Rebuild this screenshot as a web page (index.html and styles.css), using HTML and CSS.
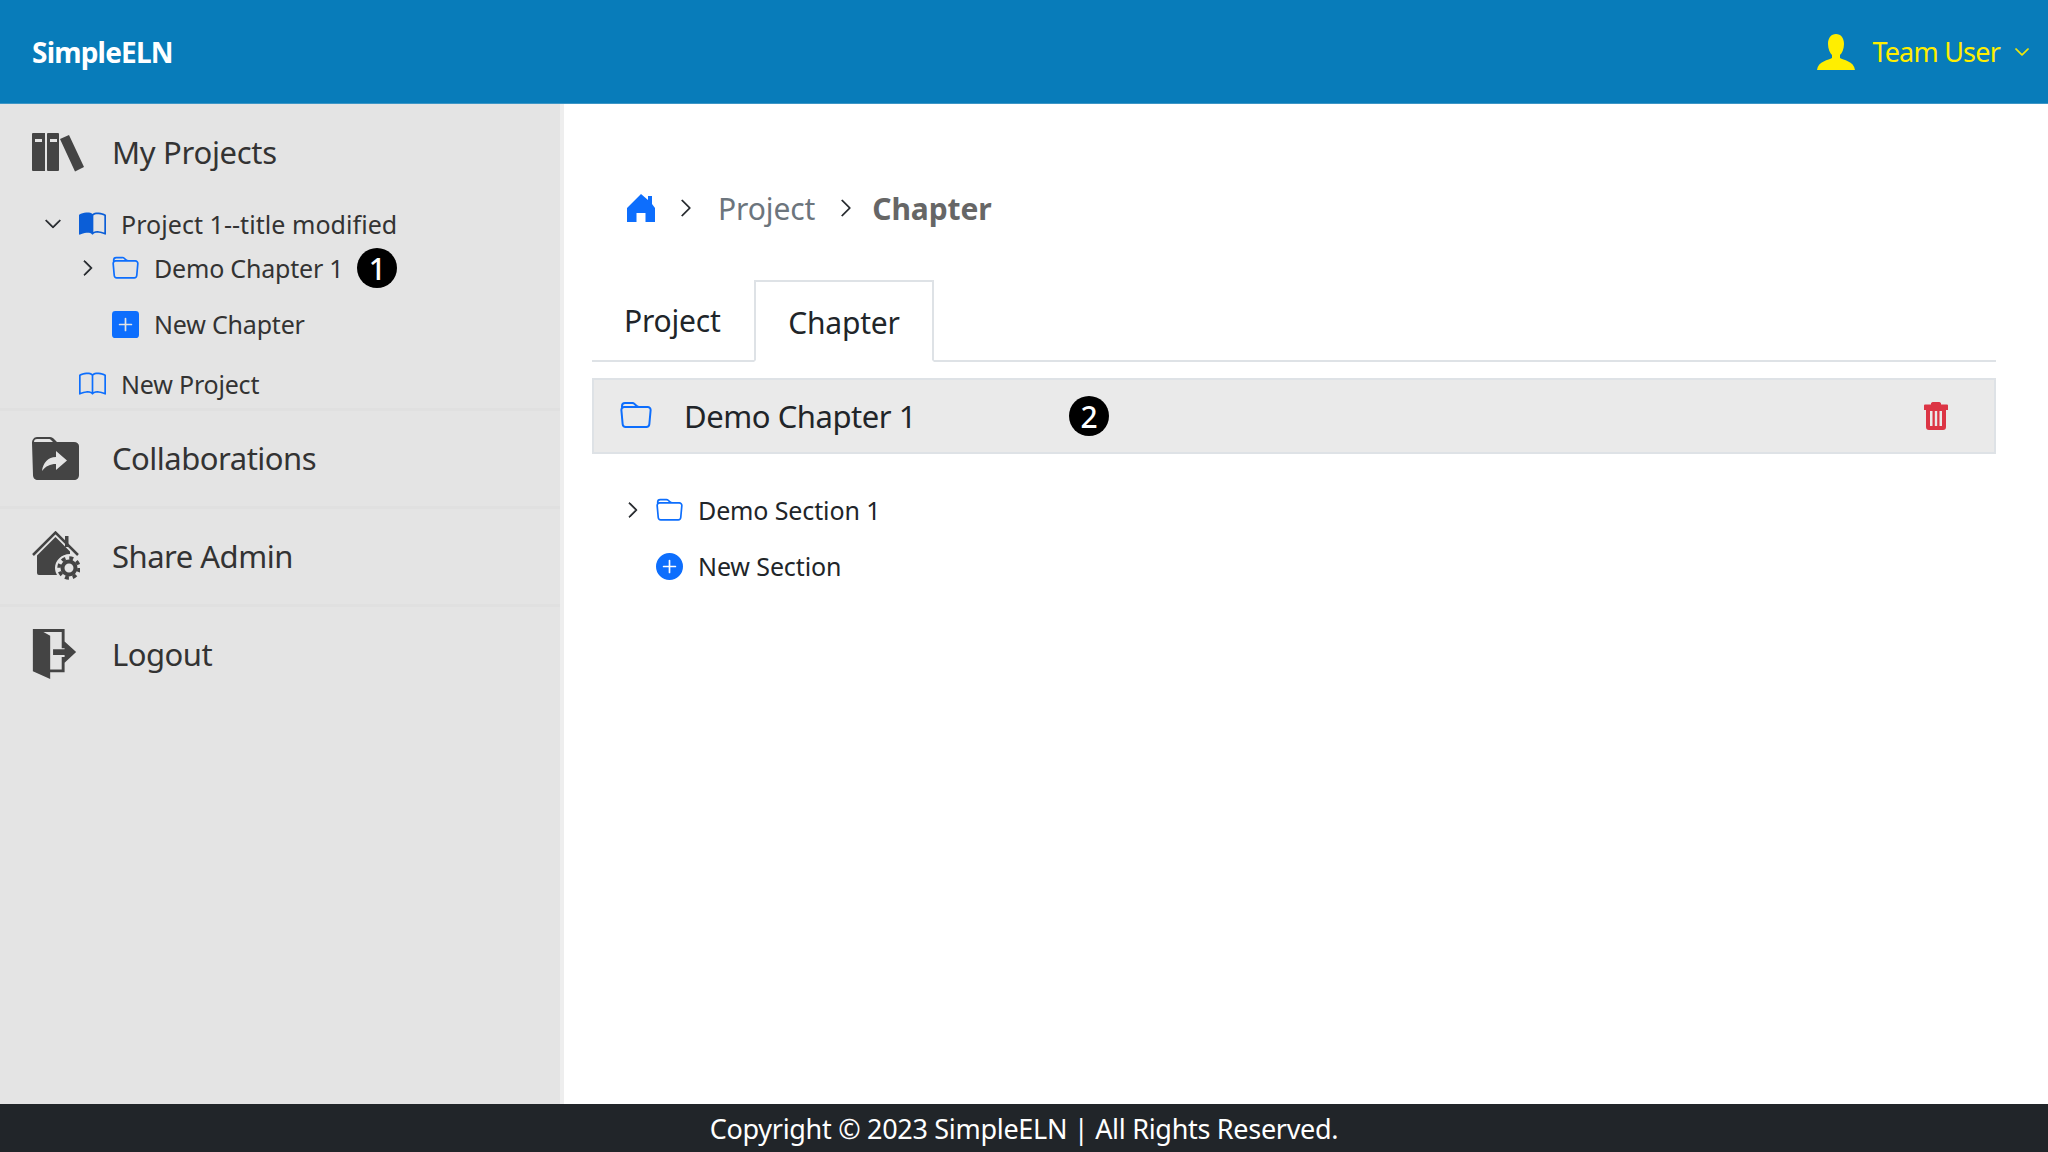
FILE: index.html
```html
<!DOCTYPE html>
<html lang="en">
<head>
    <meta charset="UTF-8">
    <meta name="viewport" content="width=device-width, initial-scale=1.0">
    <title>SimpleELN</title>
    <link rel="stylesheet" href="styles.css">
</head>
<body>
    <svg class="defs" width="0" height="0">
        <symbol id="folder" viewBox="0 0 16 16"><path d="M.54 3.87.5 3a2 2 0 0 1 2-2h3.672a2 2 0 0 1 1.414.586l.828.828A2 2 0 0 0 9.828 3h3.982a2 2 0 0 1 1.992 2.181l-.637 7A2 2 0 0 1 13.174 14H2.826a2 2 0 0 1-1.991-1.819l-.637-7a1.99 1.99 0 0 1 .342-1.31zM2.19 4a1 1 0 0 0-.996 1.09l.637 7a1 1 0 0 0 .995.91h10.348a1 1 0 0 0 .995-.91l.637-7A1 1 0 0 0 13.81 4H2.19zm4.69-1.707A1 1 0 0 0 6.172 2H2.5a1 1 0 0 0-1 .981l.006.139C1.72 3.042 1.95 3 2.19 3h5.396l-.707-.707z"/></symbol>
        <symbol id="chev-right" viewBox="0 0 16 16"><path fill-rule="evenodd" d="M4.646 1.646a.5.5 0 0 1 .708 0l6 6a.5.5 0 0 1 0 .708l-6 6a.5.5 0 0 1-.708-.708L10.293 8 4.646 2.354a.5.5 0 0 1 0-.708z"/></symbol>
        <symbol id="chev-down" viewBox="0 0 16 16"><path fill-rule="evenodd" d="M1.646 4.646a.5.5 0 0 1 .708 0L8 10.293l5.646-5.647a.5.5 0 0 1 .708.708l-6 6a.5.5 0 0 1-.708 0l-6-6a.5.5 0 0 1 0-.708z"/></symbol>
    </svg>

    <header class="topbar">
        <div class="brand">SimpleELN</div>
        <div class="user">
            <svg class="user-icon" viewBox="0 0 38 36"><path d="M19 0c5 0 8 4 8 10 0 5-2 9-4 11v3c3 2 14 3 15 12H0c1-9 12-10 15-12v-3c-2-2-4-6-4-11C11 4 14 0 19 0z"/></svg>
            <span>Team User</span>
            <svg class="user-caret"><use href="#chev-down"/></svg>
        </div>
    </header>

    <div class="middle">
        <aside class="sidebar">
            <section class="side-section first">
                <div class="side-link">
                    <span class="side-icon">
                        <svg width="52" height="40" viewBox="0 0 52 40"><path fill-rule="evenodd" d="M1 1h12v38H1a1 1 0 0 1-1-1V2a1 1 0 0 1 1-1zm2 6v3h7V7zM16 1h10a1 1 0 0 1 1 1v36a1 1 0 0 1-1 1H16a1 1 0 0 1-1-1V2a1 1 0 0 1 1-1zm2 6v3h7V7zM28 7l9-4 15 32-9 4.500z"/></svg>
                    </span>
                    <span>My Projects</span>
                </div>
                <ul class="tree">
                    <li class="tree-row">
                        <svg class="caret-down"><use href="#chev-down"/></svg>
                        <svg class="tree-icon book-dark" viewBox="0 0 16 16"><path d="M8.500 2.687c.654-.689 1.782-.886 3.112-.752 1.234.124 2.503.523 3.388.893v9.923c-.918-.35-2.107-.692-3.287-.81-1.094-.111-2.278-.039-3.213.492V2.687zM8 1.783C7.015.936 5.587.81 4.287.94c-1.514.153-3.042.672-3.994 1.105A.5.5 0 0 0 0 2.500v11a.5.5 0 0 0 .707.455c.882-.4 2.303-.881 3.680-1.020 1.409-.142 2.590.087 3.223.877a.5.5 0 0 0 .78 0c.633-.79 1.814-1.019 3.222-.877 1.378.139 2.800.62 3.681 1.020A.5.5 0 0 0 16 13.500v-11a.5.5 0 0 0-.293-.455c-.952-.433-2.480-.952-3.994-1.105C10.413.809 8.985.936 8 1.783z"/></svg>
                        <span class="project-title">Project 1--title modified</span>
                    </li>
                    <li class="tree-row nested">
                        <svg class="caret-right"><use href="#chev-right"/></svg>
                        <svg class="tree-icon blue"><use href="#folder"/></svg>
                        <span>Demo Chapter 1</span>
                        <span class="marker">1</span>
                    </li>
                    <li class="tree-row nested new-chapter">
                        <svg class="tree-icon blue" viewBox="0 0 16 16"><path d="M2 0a2 2 0 0 0-2 2v12a2 2 0 0 0 2 2h12a2 2 0 0 0 2-2V2a2 2 0 0 0-2-2H2zm6.500 4.500v3h3a.5.5 0 0 1 0 1h-3v3a.5.5 0 0 1-1 0v-3h-3a.5.5 0 0 1 0-1h3v-3a.5.5 0 0 1 1 0z"/></svg>
                        <span>New Chapter</span>
                    </li>
                    <li class="tree-row new-project">
                        <svg class="tree-icon blue" viewBox="0 0 16 16"><path d="M1 2.828c.885-.37 2.154-.769 3.388-.893 1.33-.134 2.458.063 3.112.752v9.746c-.935-.53-2.120-.603-3.213-.493-1.180.12-2.370.461-3.287.811V2.828zm7.500-.141c.654-.689 1.782-.886 3.112-.752 1.234.124 2.503.523 3.388.893v9.923c-.918-.35-2.107-.692-3.287-.81-1.094-.111-2.278-.039-3.213.492V2.687zM8 1.783C7.015.936 5.587.81 4.287.94c-1.514.153-3.042.672-3.994 1.105A.5.5 0 0 0 0 2.500v11a.5.5 0 0 0 .707.455c.882-.4 2.303-.881 3.680-1.020 1.409-.142 2.590.087 3.223.877a.5.5 0 0 0 .78 0c.633-.79 1.814-1.019 3.222-.877 1.378.139 2.800.62 3.681 1.020A.5.5 0 0 0 16 13.500v-11a.5.5 0 0 0-.293-.455c-.952-.433-2.480-.952-3.994-1.105C10.413.809 8.985.936 8 1.783z"/></svg>
                        <span>New Project</span>
                    </li>
                </ul>
            </section>
            <section class="side-section">
                <div class="side-link">
                    <span class="side-icon">
                        <svg width="47" height="43" viewBox="0 0 47 43"><path fill-rule="evenodd" d="M5 0h13c2 0 3 1 4 2l3 3h17c3 0 5 2 5 4v29c0 3-2 5-5 5H6c-3 0-5-2-5-5L0 6c0-3 2-6 5-6zm0 2c-2 0-3 1-3 3h19l-2-2c-1-1-1-1-2-1zm19 12v6c-8 0-13 6-14 14 4-5 8-7 14-7v6l11-9.500z"/></svg>
                    </span>
                    <span>Collaborations</span>
                </div>
            </section>
            <section class="side-section">
                <div class="side-link">
                    <span class="side-icon">
                        <svg class="house-icon" width="48" height="50" viewBox="0 0 48 50">
                            <path class="house-line" d="M1 24 23.500 1.500 46 24"/>
                            <path d="M33 5h3.500v11H33zM23.500 6 38 20.500V23c-9 0-15 7-15 14 0 3 1 5 2 7H7a2 2 0 0 1-2-2V24.500z"/>
                            <circle class="gear-ring" cx="37" cy="37" r="6.500"/>
                            <circle class="gear-teeth" cx="37" cy="37" r="10"/>
                        </svg>
                    </span>
                    <span>Share Admin</span>
                </div>
            </section>
            <section class="side-section">
                <div class="side-link">
                    <span class="side-icon">
                        <svg width="45" height="50" viewBox="0 0 45 52"><path d="M0 0h33v20h-3V3H11l7 4v35h12V29h3v16H18v7L0 44zM21 21h12v-8l12 11-12 11v-8H21z" fill-rule="evenodd"/></svg>
                    </span>
                    <span>Logout</span>
                </div>
            </section>
        </aside>

        <main class="content">
            <nav class="crumbs">
                <svg class="crumb-home" viewBox="0 0 28 28"><path d="M14 0l7 6V2h4v8l3 4v14h-9.500v-9h-9v9H0V14z"/></svg>
                <svg class="crumb-sep"><use href="#chev-right"/></svg>
                <span class="crumb">Project</span>
                <svg class="crumb-sep"><use href="#chev-right"/></svg>
                <span class="crumb current">Chapter</span>
            </nav>

            <div class="tabs">
                <div class="tab">Project</div>
                <div class="tab active">Chapter</div>
            </div>

            <div class="chapter-bar">
                <svg class="bar-folder blue"><use href="#folder"/></svg>
                <span class="bar-title">Demo Chapter 1</span>
                <span class="marker bar-marker">2</span>
                <svg class="trash" viewBox="0 0 24 28"><path fill-rule="evenodd" d="M9 0h6a2 2 0 0 1 2 2.500h6a1 1 0 0 1 1 1V8h-2v17a3 3 0 0 1-3 3H5a3 3 0 0 1-3-3V8H0V3.500a1 1 0 0 1 1-1h6A2 2 0 0 1 9 0zM6 9v15h2.500V9zm4.800 0v15h2.400V9zm4.700 0v15H18V9z"/></svg>
            </div>

            <ul class="section-list">
                <li class="section-row">
                    <svg class="caret-right"><use href="#chev-right"/></svg>
                    <svg class="tree-icon blue"><use href="#folder"/></svg>
                    <span>Demo Section 1</span>
                </li>
                <li class="section-row new-section">
                    <svg class="tree-icon blue" viewBox="0 0 16 16"><path d="M16 8A8 8 0 1 1 0 8a8 8 0 0 1 16 0zM8.500 4.500a.5.5 0 0 0-1 0v3h-3a.5.5 0 0 0 0 1h3v3a.5.5 0 0 0 1 0v-3h3a.5.5 0 0 0 0-1h-3v-3z"/></svg>
                    <span>New Section</span>
                </li>
            </ul>
        </main>
    </div>

    <footer class="footer">Copyright © 2023 SimpleELN | All Rights Reserved.</footer>
</body>
</html>
```

FILE: styles.css
```css
* {
    box-sizing: border-box;
}
body {
    margin: 0;
    height: 100vh;
    display: flex;
    flex-direction: column;
    overflow: hidden;
    font-family: "Noto Sans", "Open Sans", sans-serif;
    color: #212529;
    background-color: #fff;
}
svg {
    fill: currentColor;
    flex-shrink: 0;
}
ul {
    list-style: none;
    margin: 0;
    padding: 0;
}
.defs {
    position: absolute;
}
.blue {
    color: #0d6efd;
}

/* top bar */
.topbar {
    height: 104px;
    flex-shrink: 0;
    display: flex;
    align-items: center;
    justify-content: space-between;
    padding: 0 18px 0 32px;
    background-color: #087cba;
    border-bottom: 1px solid #3d96c6;
}
.brand {
    color: #fff;
    font-size: 28px;
    font-weight: 700;
    letter-spacing: -0.8px;
}
.user {
    display: flex;
    align-items: center;
    color: #ffee00;
    font-size: 27px;
    letter-spacing: -0.8px;
}
.user-icon {
    width: 38px;
    height: 36px;
    margin-right: 17px;
}
.user-caret {
    width: 16px;
    height: 16px;
    margin-left: 14px;
    stroke: currentColor;
    stroke-width: 0.8;
}

.middle {
    flex: 1;
    display: flex;
    min-height: 0;
}

/* left menu */
.sidebar {
    width: 564px;
    flex-shrink: 0;
    background-color: #e4e4e4;
    border-right: 4px solid #eeeeee;
}
.side-section {
    height: 98px;
    border-top: 3px solid #e0e0e0;
}
.side-section.first {
    height: 304px;
    border-top: 0;
}
.side-link {
    height: 94px;
    display: flex;
    align-items: center;
    color: #333;
    font-size: 31px;
    letter-spacing: -0.5px;
}
.first .side-link {
    height: 95px;
    letter-spacing: -0.3px;
}
.side-icon {
    width: 112px;
    padding-left: 32px;
    display: flex;
    color: #444;
}
.house-line {
    fill: none;
    stroke: currentColor;
    stroke-width: 2.5;
}
.gear-ring {
    fill: none;
    stroke: currentColor;
    stroke-width: 4;
}
.gear-teeth {
    fill: none;
    stroke: currentColor;
    stroke-width: 3.5;
    stroke-dasharray: 4 3.85;
}
.tree {
    margin-top: 3px;
}
.tree-row {
    height: 44px;
    display: flex;
    align-items: center;
    padding-left: 44px;
    color: #333;
    font-size: 25px;
    letter-spacing: -0.2px;
}
.project-title {
    letter-spacing: 0.05px;
}
.tree-row.nested {
    padding-left: 82px;
}
.tree-row.new-chapter {
    margin-top: 12px;
    padding-left: 112px;
}
.tree-row.new-project {
    margin-top: 16px;
    padding-left: 79px;
}
.caret-down {
    width: 18px;
    height: 18px;
    margin-right: 17px;
    color: #212529;
    stroke: currentColor;
    stroke-width: 0.8;
}
.caret-right {
    width: 18px;
    height: 18px;
    margin-right: 15px;
    margin-left: -3px;
    color: #212529;
    stroke: currentColor;
    stroke-width: 0.8;
}
.tree-icon {
    width: 27px;
    height: 27px;
    margin-right: 15px;
}
.book-dark {
    color: #0b5ed7;
}
.marker {
    width: 40px;
    height: 40px;
    margin-left: 14px;
    border-radius: 50%;
    display: flex;
    align-items: center;
    justify-content: center;
    background-color: #000;
    color: #fff;
    font-size: 30px;
    font-weight: 500;
    letter-spacing: 0;
}

/* main area */
.content {
    flex: 1;
    min-width: 0;
    padding: 0 52px 0 28px;
}
.crumbs {
    height: 100px;
    margin-top: 54px;
    display: flex;
    align-items: center;
    padding-left: 35px;
    font-size: 30px;
    letter-spacing: -0.1px;
}
.crumb-home {
    width: 28px;
    height: 28px;
    color: #0d6efd;
}
.crumb-sep {
    width: 20px;
    height: 20px;
    margin: 0 22px 0 21px;
    color: #212529;
    stroke: currentColor;
    stroke-width: 0.4;
}
.crumb {
    color: #6c757d;
}
.crumb.current {
    font-weight: 700;
    color: #666;
    margin-left: -6px;
}
.tabs {
    height: 82px;
    margin-top: 22px;
    display: flex;
    align-items: flex-end;
    border-bottom: 2px solid #dee2e6;
    font-size: 30px;
    letter-spacing: -0.2px;
}
.tab {
    width: 162px;
    height: 69px;
    padding: 0 0 10px 32px;
    display: flex;
    align-items: center;
    color: #212529;
}
.tab.active {
    width: 180px;
    height: 82px;
    margin-bottom: -2px;
    padding: 2px 0 0;
    justify-content: center;
    border: 2px solid #dee2e6;
    border-bottom-color: #fff;
    background-color: #fff;
}
.chapter-bar {
    height: 76px;
    margin-top: 16px;
    display: flex;
    align-items: center;
    padding-left: 26px;
    background-color: #eaeaea;
    border: 2px solid #dee2e6;
    font-size: 31px;
    letter-spacing: -0.45px;
}
.bar-folder {
    width: 32px;
    height: 32px;
    margin-right: 32px;
}
.bar-title {
    width: 385px;
    color: #212529;
}
.bar-marker {
    margin-left: 0;
}
.trash {
    width: 24px;
    height: 28px;
    margin-left: auto;
    margin-bottom: 1px;
    margin-right: 46px;
    color: #dc3545;
}
.section-list {
    margin-top: 28px;
    padding-left: 36px;
}
.section-row {
    height: 56px;
    display: flex;
    align-items: center;
    font-size: 25px;
    letter-spacing: -0.12px;
    color: #212529;
}
.section-row .caret-right {
    margin-left: -4px;
    margin-right: 14px;
}
.section-row .tree-icon {
    margin-right: 15px;
}
.section-row.new-section {
    padding-left: 28px;
}

.footer {
    height: 48px;
    flex-shrink: 0;
    display: flex;
    align-items: center;
    justify-content: center;
    padding-top: 1px;
    background-color: #212529;
    color: #fff;
    font-size: 27px;
    letter-spacing: -0.3px;
}
```
